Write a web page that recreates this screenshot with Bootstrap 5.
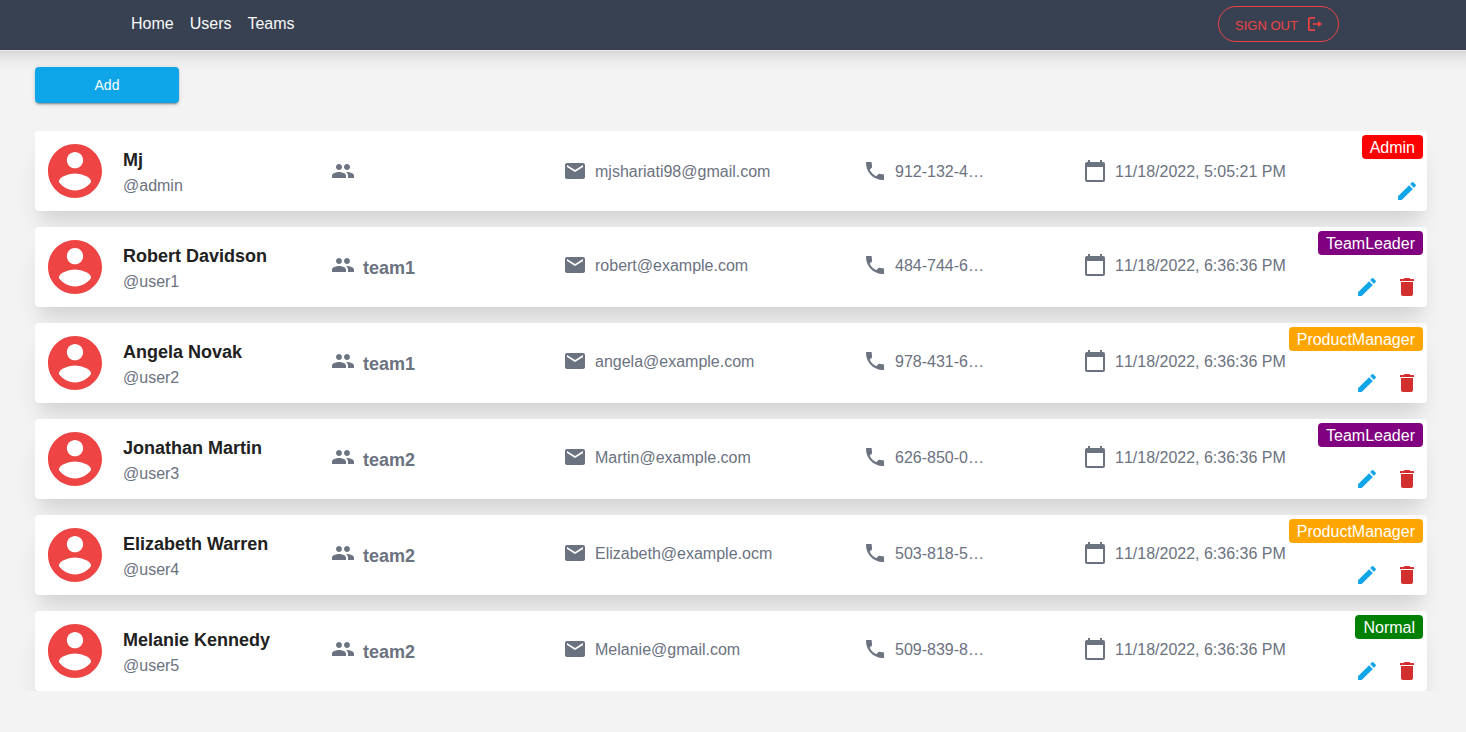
<!DOCTYPE html>
<html lang="en">
<head>
<meta charset="utf-8">
<meta name="viewport" content="width=device-width, initial-scale=1">
<title>Users</title>
<link href="https://cdn.jsdelivr.net/npm/bootstrap@5.3.0/dist/css/bootstrap.min.css" rel="stylesheet">
<style>
  body { font-family: "Liberation Sans", Arial, sans-serif; background: #f3f3f3; color: #6b7280; height: 100vh; overflow: hidden; }
  svg { fill: currentColor; flex: none; display: block; }
  .topbar { height: 51px; margin: 0 -20px; padding: 0 147px 3px 151px; background: #384152; border-bottom: 1px solid #e5e7eb;
    box-shadow: 0 10px 15px -3px rgba(0,0,0,.1), 0 4px 6px -2px rgba(0,0,0,.05); }
  .topbar .nav-link { color: #f9fafb; padding: 0; line-height: 24px; }
  .btn-signout { width: 121px; height: 36px; border: 1px solid #ef4444; border-radius: 18px; color: #ef4444; font-size: 13px; line-height: 20px; padding: 0 16px; }
  .btn-signout span { padding-top: 4px; }
  .btn-add { width: 144px; height: 36px; margin: 16px 0 28px; padding: 0; border: 0; border-radius: 4px; background: #0ea5e9; color: #fff; font-size: 14px;
    box-shadow: 0 3px 1px -2px rgba(0,0,0,.2), 0 2px 2px rgba(0,0,0,.14), 0 1px 5px rgba(0,0,0,.12); }
  .page { padding: 0 39px 0 35px; }
  .user-list { margin: 0 -35px; padding: 0 35px; height: 560px; overflow: hidden; }
  .user-card { height: 80px; flex: none; border-radius: 4px; padding-left: 8px;
    display: grid; grid-template-columns: 80px 208px 232px 300px 220px 203px 1fr; grid-template-rows: 80px; align-items: center;
    box-shadow: 0 20px 25px -5px rgba(0,0,0,.1), 0 10px 10px -5px rgba(0,0,0,.04); }
  .avatar { color: #ef4444; width: 64px; height: 64px; }
  .identity { padding-top: 2px; }
  .user-name { font-size: 18px; line-height: 28px; font-weight: 700; color: #212121; }
  .team-name { font-size: 18px; line-height: 28px; font-weight: 700; margin-top: 6px; }
  .in-team .info { margin-top: -4px; }
  .value { padding-top: 1px; margin-bottom: -1px; }
  .date { font-kerning: none; white-space: nowrap; }
  .role { font-size: 16px; line-height: 23px; padding: 1px 8px 0; border-radius: 4px; color: #fff; margin: 4px 4px 0 0; }
  .role-admin { background: red; } .role-leader { background: purple; } .role-manager { background: orange; } .role-normal { background: green; }
  .actions { padding: 0 8px 8px 0; gap: 16px; }
  .edit { color: #0ea5e9; } .trash { color: #d32f2f; }
</style>
</head>
<body>
<svg class="d-none" aria-hidden="true">
  <symbol id="i-avatar" viewBox="0.148 0.148 23.704 23.704"><path d="M12 2C6.48 2 2 6.48 2 12s4.480 10 10 10 10-4.480 10-10S17.520 2 12 2zm0 3c1.660 0 3 1.340 3 3s-1.340 3-3 3-3-1.340-3-3 1.340-3 3-3zm0 14.200c-2.500 0-4.710-1.280-6-3.220.03-1.990 4-3.080 6-3.080 1.990 0 5.970 1.090 6 3.080-1.290 1.940-3.500 3.220-6 3.220z"/></symbol>
  <symbol id="i-group" viewBox="0 0 24 24"><path d="M16 11c1.660 0 2.990-1.340 2.990-3S17.660 5 16 5c-1.660 0-3 1.340-3 3s1.340 3 3 3zm-8 0c1.660 0 2.990-1.340 2.990-3S9.660 5 8 5C6.340 5 5 6.340 5 8s1.340 3 3 3zm0 2c-2.330 0-7 1.170-7 3.500V19h14v-2.500c0-2.330-4.670-3.500-7-3.500zm8 0c-.29 0-.62.02-.97.05 1.160.84 1.970 1.970 1.970 3.450V19h6v-2.500c0-2.330-4.670-3.500-7-3.500z"/></symbol>
  <symbol id="i-mail" viewBox="0 0 24 24"><path d="M20 4H4c-1.100 0-1.990.9-1.990 2L2 18c0 1.100.9 2 2 2h16c1.100 0 2-.9 2-2V6c0-1.100-.9-2-2-2zm0 4-8 5-8-5V6l8 5 8-5v2z"/></symbol>
  <symbol id="i-phone" viewBox="0 0 24 24"><path d="M21 15.460l-5.270-.610-2.520 2.520c-2.830-1.440-5.150-3.750-6.590-6.590l2.530-2.530L8.540 3H3.030C2.450 13.180 10.820 21.550 21 20.970v-5.510z"/></symbol>
  <symbol id="i-date" viewBox="0 0 24 24"><path d="M20 3h-1V1h-2v2H7V1H5v2H4c-1.100 0-2 .9-2 2v16c0 1.100.9 2 2 2h16c1.100 0 2-.9 2-2V5c0-1.100-.9-2-2-2zm0 18H4V8h16v13z"/></symbol>
  <symbol id="i-edit" viewBox="0 0 24 24"><path d="M3 17.250V21h3.750L17.810 9.940l-3.750-3.750L3 17.250zM20.710 7.040c.39-.39.39-1.020 0-1.410l-2.340-2.340a.996.996 0 0 0-1.410 0l-1.830 1.830 3.750 3.750 1.830-1.830z"/></symbol>
  <symbol id="i-trash" viewBox="0 0 24 24"><path d="M6 19c0 1.100.9 2 2 2h8c1.100 0 2-.9 2-2V7H6v12zM19 4h-3.500l-1-1h-5l-1 1H5v2h14V4z"/></symbol>
</svg>

<header class="topbar d-flex align-items-center justify-content-between position-relative">
  <nav class="nav gap-3">
    <a class="nav-link" href="#">Home</a><a class="nav-link" href="#">Users</a><a class="nav-link" href="#">Teams</a>
  </nav>
  <button class="btn btn-signout d-flex align-items-center justify-content-between"><span>SIGN OUT</span>
    <svg width="14" height="14" viewBox="0 0 14 14"><path d="M7 .85H1.850a1 1 0 0 0-1 1v10.300a1 1 0 0 0 1 1H7M4.700 7h6" fill="none" stroke="currentColor" stroke-width="1.700"/><path d="M10 3.800 14 7l-4 3.200z"/></svg>
  </button>
</header>

<main class="page">
  <button class="btn btn-add d-block">Add</button>
  <section class="user-list d-flex flex-column gap-3" id="users"></section>
</main>

<script src="https://cdn.jsdelivr.net/npm/bootstrap@5.3.0/dist/js/bootstrap.bundle.min.js"></script>
<script>
  const users = [
    ["Mj", "@admin", "", "mjshariati98@gmail.com", "912-132-4…", "11/18/2022, 5:05:21 PM", "Admin", "admin"],
    ["Robert Davidson", "@user1", "team1", "robert@example.com", "484-744-6…", "11/18/2022, 6:36:36 PM", "TeamLeader", "leader"],
    ["Angela Novak", "@user2", "team1", "angela@example.com", "978-431-6…", "11/18/2022, 6:36:36 PM", "ProductManager", "manager"],
    ["Jonathan Martin", "@user3", "team2", "Martin@example.com", "626-850-0…", "11/18/2022, 6:36:36 PM", "TeamLeader", "leader"],
    ["Elizabeth Warren", "@user4", "team2", "Elizabeth@example.ocm", "503-818-5…", "11/18/2022, 6:36:36 PM", "ProductManager", "manager"],
    ["Melanie Kennedy", "@user5", "team2", "Melanie@gmail.com", "509-839-8…", "11/18/2022, 6:36:36 PM", "Normal", "normal"]
  ];
  const icon = (name, cls = "") => `<svg class="${cls}" width="24" height="24"><use href="#i-${name}"/></svg>`;
  const info = (name, text, cls = "value") => `<div class="info d-flex align-items-center gap-2">${icon(name)}<span class="${cls}">${text}</span></div>`;
  document.getElementById("users").innerHTML = users.map(([name, login, team, mail, phone, date, role, kind]) => `
    <article class="user-card bg-white ${team ? "in-team" : ""}">
      <svg class="avatar"><use href="#i-avatar"/></svg>
      <div class="identity"><div class="user-name">${name}</div><div>${login}</div></div>
      ${team ? info("group", team, "team-name") : `<div class="info">${icon("group")}</div>`}
      ${info("mail", mail)}${info("phone", phone)}${info("date", date, "value date")}
      <div class="d-flex flex-column justify-content-between align-items-end h-100">
        <span class="role role-${kind}">${role}</span>
        <div class="actions d-flex">${icon("edit", "edit")}${team ? icon("trash", "trash") : ""}</div>
      </div>
    </article>`).join("");
</script>
</body>
</html>
